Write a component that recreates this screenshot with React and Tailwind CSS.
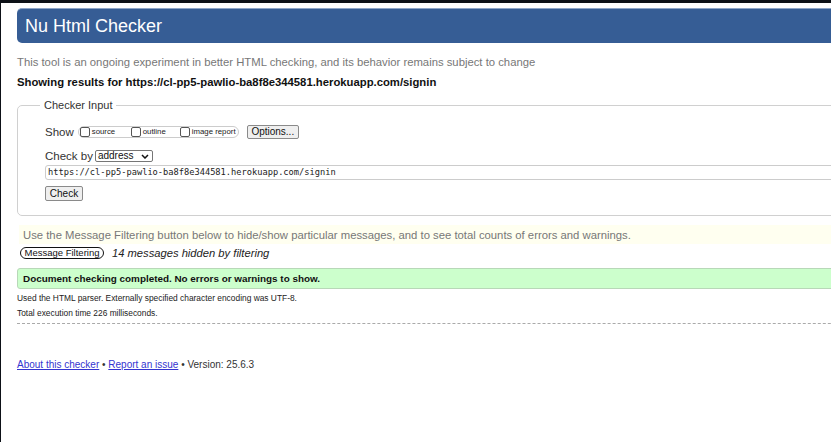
import React from "react";

const sans = { fontFamily: '"Liberation Sans", Arial, sans-serif' };

function Box({ label }) {
  return (
    <label className="flex items-center">
      <span className="inline-block w-[10px] h-[10px] border border-[#555] rounded-[2px] bg-white" />
      <span className="text-[7.8px] leading-[10px] ml-[2px] text-[#222]">{label}</span>
    </label>
  );
}

export default function App() {
  return (
    <div
      className="w-[831px] h-[442px] overflow-hidden bg-white border-t-[3px] border-l border-[#0d1117] text-[#222]"
      style={sans}
    >
      <div className="w-[1000px] pl-4">
        <div className="mt-[5px] h-[35px] rounded-[5px] bg-[#365d95] border-t border-[#8fa6c8] flex items-center pl-[8px]">
          <h1 className="text-white text-[18px] leading-[20px]">Nu Html Checker</h1>
        </div>

        <p className="mt-[12px] text-[11.3px] leading-[14px] text-[#777]">
          This tool is an ongoing experiment in better HTML checking, and its behavior remains subject to change
        </p>
        <p className="mt-[6px] text-[11.3px] leading-[14px] font-bold text-[#111]">
          Showing results for https://cl-pp5-pawlio-ba8f8e344581.herokuapp.com/signin
        </p>

        <fieldset className="mt-[9px] border border-[#d0d0d0] rounded-[5px] pb-[14px]">
          <legend className="ml-[22px] px-[4px] text-[11px] leading-[14px] text-[#333]">Checker Input</legend>

          <div className="pl-[27px]">
            <div className="mt-[12px] h-[16px] flex items-center">
              <span className="text-[11.5px] leading-[14px] text-[#333]">Show</span>
              <div className="ml-[4px] w-[161px] h-[12px] border border-[#ccc] rounded-[6px] flex items-center pl-[1px]">
                <div className="w-[51px]"><Box label="source" /></div>
                <div className="w-[49px]"><Box label="outline" /></div>
                <Box label="image report" />
              </div>
              <button className="ml-[8px] w-[52px] h-[14px] bg-[#efefef] border border-[#8a8a8a] rounded-[2px] text-[10px] leading-[12px] text-[#111]">
                Options...
              </button>
            </div>

            <div className="mt-[9px] h-[14px] flex items-center">
              <span className="text-[11.5px] leading-[14px] text-[#333]">Check by</span>
              <div className="ml-[2px] w-[58px] h-[12px] border border-[#767676] rounded-[2px] flex items-center justify-between pl-[2px] pr-[3px]">
                <span className="text-[10px] leading-[10px] text-[#111]">address</span>
                <svg width="8" height="5" viewBox="0 0 8 5">
                  <path d="M1 1l3 3 3-3" fill="none" stroke="#111" strokeWidth="1.5" />
                </svg>
              </div>
            </div>

            <div
              className="mt-[2px] h-[15px] border border-[#ccc] rounded-l-[3px] flex items-center pl-[2px] text-[8.7px] text-[#222]"
              style={{ fontFamily: '"DejaVu Sans Mono", "Liberation Mono", monospace' }}
            >
              https://cl-pp5-pawlio-ba8f8e344581.herokuapp.com/signin
            </div>

            <button className="mt-[6px] w-[38px] h-[15px] bg-[#efefef] border border-[#8a8a8a] rounded-[2px] text-[10px] leading-[12px] text-[#111] block">
              Check
            </button>
          </div>
        </fieldset>

        <div className="mt-[9px] ml-[2px] h-[19px] bg-[#fffff0] flex items-center pl-[4px]">
          <span className="text-[11.3px] leading-[14px] text-[#777]">
            Use the Message Filtering button below to hide/show particular messages, and to see total counts of errors and warnings.
          </span>
        </div>

        <div className="mt-[2px] h-[14px] flex items-center">
          <button className="ml-[3px] w-[84px] h-[12px] border-[1.5px] border-[#111] rounded-full text-[9.5px] leading-[10px] text-[#111] bg-white">
            Message Filtering
          </button>
          <span className="ml-[8px] text-[11.2px] leading-[14px] italic text-[#222]">14 messages hidden by filtering</span>
        </div>

        <div className="mt-[8px] h-[21px] bg-[#ccffcc] border border-[#b8d8b8] rounded-[3px] flex items-center pl-[5px]">
          <span className="text-[9.9px] leading-[12px] font-bold text-[#111]">
            Document checking completed. No errors or warnings to show.
          </span>
        </div>

        <p className="mt-[3px] text-[8.4px] leading-[12px] text-[#222]">
          Used the HTML parser. Externally specified character encoding was UTF-8.
        </p>
        <p className="mt-[3px] text-[8.4px] leading-[12px] text-[#222]">Total execution time 226 milliseconds.</p>

        <div className="mt-[4px] border-t border-dashed border-[#aaa]" />

        <p className="mt-[35px] text-[10px] leading-[12px] text-[#333]">
          <a href="#" className="text-[#3434d0] underline">About this checker</a>
          {" • "}
          <a href="#" className="text-[#3434d0] underline">Report an issue</a>
          {" • Version: 25.6.3"}
        </p>
      </div>
    </div>
  );
}
